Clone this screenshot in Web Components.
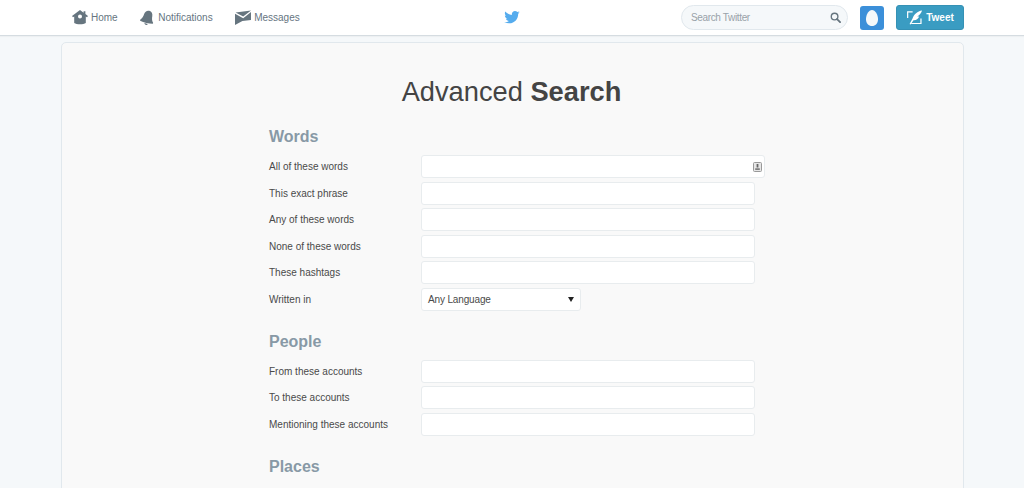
<!DOCTYPE html>
<html>
<head>
<meta charset="utf-8">
<title>Advanced Search</title>
<style>
  html, body { margin: 0; height: 488px; overflow: hidden; background: #f5f8fa; }
  body { font-family: "Liberation Sans", Arial, sans-serif; color: #444; }
</style>
</head>
<body>
<tw-topbar>
  <tw-nav-item slot="left" label="Home">
    <svg viewBox="0 0 16 15" width="16" height="15"><path fill="#66757f" fill-rule="evenodd" d="M8 0 L11.6 2.7 V1.2 H13.4 V4 L16 6 L15 7.2 L13.8 6.4 V13 C11.5 14.8 4.5 14.8 2.2 13 V6.4 L1 7.2 L0 6 Z M8 4.6 A2 2 0 1 0 8 8.6 A2 2 0 1 0 8 4.6 Z"/></svg>
  </tw-nav-item>
  <tw-nav-item slot="left" label="Notifications">
    <svg viewBox="0 0 15 16" width="15" height="16"><g transform="rotate(14 7.5 8)"><path fill="#66757f" d="M7.5 .6 C10 .6 11.5 2.6 11.7 5 C11.9 7.6 12.4 9.8 14.2 11.4 L14 12.4 C10 13.2 5 13.2 1 12.4 L.8 11.4 C2.6 9.8 3.1 7.6 3.3 5 C3.5 2.6 5 .6 7.5 .6 Z"/><path fill="#66757f" d="M5.8 13.7 C6.8 13.9 8.2 13.9 9.2 13.7 C9 15.6 6 15.6 5.8 13.7 Z"/></g></svg>
  </tw-nav-item>
  <tw-nav-item slot="left" label="Messages">
    <svg viewBox="0 0 16 15" width="16" height="15"><path fill="#66757f" d="M.6 2.6 L16 .4 L8.2 6.6 Z M0 3.8 L8.2 8.2 L16 2 V10 L7.4 11 L0 15 Z"/></svg>
  </tw-nav-item>
  <svg slot="center" viewBox="0 0 24 20" width="16" height="13"><path fill="#55acee" d="M24 2.4c-.9.4-1.8.7-2.8.8 1-.6 1.8-1.6 2.2-2.7-1 .6-2 1-3.1 1.2C19.3.7 18 0 16.6 0c-2.7 0-4.9 2.2-4.9 4.9 0 .4 0 .8.1 1.1C7.7 5.8 4.1 3.8 1.7.9c-.4.7-.7 1.6-.7 2.5 0 1.7.9 3.2 2.2 4.1-.8 0-1.6-.2-2.2-.6v.1c0 2.4 1.7 4.4 3.9 4.8-.4.1-.8.2-1.3.2-.3 0-.6 0-.9-.1.6 2 2.4 3.4 4.6 3.4-1.7 1.3-3.8 2.1-6.1 2.1-.4 0-.8 0-1.2-.1C2.2 18.3 4.8 19 7.5 19c9.1 0 14-7.5 14-14v-.6c1-.7 1.8-1.6 2.5-2Z"/></svg>
  <tw-search slot="right"></tw-search>
  <tw-avatar slot="right"></tw-avatar>
  <tw-tweet-button slot="right"></tw-tweet-button>
</tw-topbar>

<tw-card>
  <h1 slot="title">Advanced <b>Search</b></h1>
  <tw-section heading="Words">
    <tw-field label="All of these words" wide></tw-field>
    <tw-field label="This exact phrase"></tw-field>
    <tw-field label="Any of these words"></tw-field>
    <tw-field label="None of these words"></tw-field>
    <tw-field label="These hashtags"></tw-field>
    <tw-field label="Written in" select="Any Language"></tw-field>
  </tw-section>
  <tw-section heading="People">
    <tw-field label="From these accounts"></tw-field>
    <tw-field label="To these accounts"></tw-field>
    <tw-field label="Mentioning these accounts"></tw-field>
  </tw-section>
  <tw-section heading="Places"></tw-section>
</tw-card>

<script>
// small helper, every element gets an open shadow root with its own styles
function shadow(el, html) {
  el.attachShadow({ mode: 'open' }).innerHTML = html;
}

class TwTopbar extends HTMLElement {
  constructor() {
    super();
    shadow(this, `
      <style>
        :host { display: block; height: 35px; background: #fff; border-bottom: 1px solid #d5dce1; box-shadow: 0 1px 1px rgba(0,0,0,.03); }
        .inner { display: grid; grid-template-columns: 1fr auto 1fr; align-items: center; height: 35px; padding: 0 60px; }
        .left { display: flex; gap: 22.5px; align-items: center; padding-left: 12px; }
        .center { display: flex; align-items: center; }
        .right { display: flex; justify-content: flex-end; align-items: center; }
      </style>
      <div class="inner">
        <div class="left"><slot name="left"></slot></div>
        <div class="center"><slot name="center"></slot></div>
        <div class="right"><slot name="right"></slot></div>
      </div>`);
  }
}

class TwNavItem extends HTMLElement {
  constructor() {
    super();
    shadow(this, `
      <style>
        :host { display: flex; align-items: center; gap: 3px; font: 10px "Liberation Sans", Arial, sans-serif; color: #66757f; }
        ::slotted(svg) { display: block; }
      </style>
      <slot></slot><span>${this.getAttribute('label')}</span>`);
  }
}

class TwSearch extends HTMLElement {
  constructor() {
    super();
    shadow(this, `
      <style>
        :host { display: flex; align-items: center; justify-content: space-between; box-sizing: border-box; width: 167px; height: 25px; margin-right: 12px; padding: 0 6px 0 9px; background: #f5f8fa; border: 1px solid #e1e8ed; border-radius: 13px; font: 10px "Liberation Sans", Arial, sans-serif; letter-spacing: -.35px; color: #99a2a9; }
        svg { display: block; }
      </style>
      <span>Search Twitter</span>
      <svg viewBox="0 0 12 12" width="11" height="11"><circle cx="5" cy="5" r="3.6" fill="none" stroke="#66757f" stroke-width="1.5"/><path d="M7.7 7.7 L11 11" stroke="#66757f" stroke-width="2" stroke-linecap="round"/></svg>`);
  }
}

class TwAvatar extends HTMLElement {
  constructor() {
    super();
    shadow(this, `
      <style>
        :host { display: flex; align-items: center; justify-content: center; width: 24px; height: 24px; margin-right: 12px; background: #3b8fd9; border-radius: 3px; }
        svg { display: block; }
      </style>
      <svg viewBox="0 0 12 16" width="12" height="16"><path fill="#f5f8fa" d="M6 0 C9.2 0 12 4.6 12 9.2 C12 13.2 9.4 16 6 16 C2.6 16 0 13.2 0 9.2 C0 4.6 2.8 0 6 0 Z"/></svg>`);
  }
}

class TwTweetButton extends HTMLElement {
  constructor() {
    super();
    shadow(this, `
      <style>
        :host { display: flex; align-items: center; justify-content: center; gap: 3px; box-sizing: border-box; width: 68px; height: 25px; background: #3a9cc2; border: 1px solid #3591b5; border-radius: 3px; font: bold 10px "Liberation Sans", Arial, sans-serif; color: #fff; }
        svg { display: block; }
      </style>
      <svg viewBox="0 0 17 16" width="17" height="15"><path fill="none" stroke="#fff" stroke-width="1.3" d="M6.5 2 H1.2 V8.5 M15.4 9 V14.4 H5"/><path fill="#fff" d="M16.6 .4 C11.6 1 8 4.4 6.4 9 L3.2 15 L4.4 15.4 L7.4 10.8 C10.6 11 13 8.8 13.4 6.8 L11.4 7 C13.4 5.6 15.6 3.6 16.6 .4 Z"/></svg>
      <span>Tweet</span>`);
  }
}

class TwCard extends HTMLElement {
  constructor() {
    super();
    shadow(this, `
      <style>
        :host { display: block; box-sizing: border-box; width: 903px; margin: 6px 0 0 61px; padding: 30px 0 60px 207px; background: #f9f9f9; border: 1px solid #e1e8ed; border-radius: 5px; }
        ::slotted(h1) { margin: 0 0 17px -209px; font: 400 27.25px/37px "Liberation Sans", Arial, sans-serif; color: #444; text-align: center; }
      </style>
      <slot name="title"></slot>
      <slot></slot>`);
  }
}

class TwSection extends HTMLElement {
  constructor() {
    super();
    shadow(this, `
      <style>
        :host { display: block; margin-bottom: 21px; }
        h2 { margin: 0 0 8px; font: bold 16px/20px "Liberation Sans", Arial, sans-serif; color: #8899a6; }
        .rows { display: flex; flex-direction: column; gap: 3.5px; }
      </style>
      <h2>${this.getAttribute('heading')}</h2>
      <div class="rows"><slot></slot></div>`);
  }
}

class TwField extends HTMLElement {
  constructor() {
    super();
    const select = this.getAttribute('select');
    const control = select
      ? `<div class="box select"><span>${select}</span><i></i></div>`
      : `<div class="box${this.hasAttribute('wide') ? ' wide' : ''}">${this.hasAttribute('wide') ? '<svg viewBox="0 0 9 10" width="9" height="10"><rect x=".5" y=".5" width="8" height="9" rx="1" fill="#e6e6e6" stroke="#999"/><rect x="3.6" y="2" width="1.8" height="3.5" fill="#666"/><rect x="2.2" y="6.4" width="4.6" height="1.4" fill="#666"/></svg>' : ''}</div>`;
    shadow(this, `
      <style>
        :host { display: grid; grid-template-columns: 152px 1fr; align-items: center; height: 23px; font: 10px "Liberation Sans", Arial, sans-serif; color: #4a4a4a; }
        .box { box-sizing: border-box; width: 334px; height: 23px; background: #fff; border: 1px solid #e8ecee; border-radius: 3px; }
        .wide { display: flex; align-items: center; justify-content: flex-end; width: 344px; padding-right: 2px; }
        .wide svg { display: block; }
        .select { display: flex; align-items: center; justify-content: space-between; width: 160px; padding: 0 6px; letter-spacing: -.15px; }
        .select i { width: 0; height: 0; border: 3px solid transparent; border-top: 5px solid #222; border-bottom: 0; }
      </style>
      <span>${this.getAttribute('label')}</span>
      ${control}`);
  }
}

customElements.define('tw-topbar', TwTopbar);
customElements.define('tw-nav-item', TwNavItem);
customElements.define('tw-search', TwSearch);
customElements.define('tw-avatar', TwAvatar);
customElements.define('tw-tweet-button', TwTweetButton);
customElements.define('tw-card', TwCard);
customElements.define('tw-section', TwSection);
customElements.define('tw-field', TwField);
</script>
</body>
</html>
